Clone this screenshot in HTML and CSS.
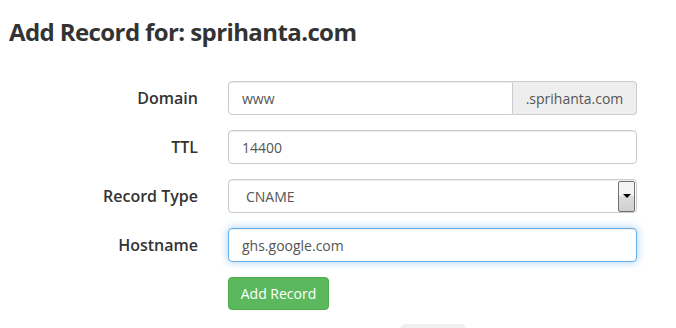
FILE: index.html
```html
<!DOCTYPE html>
<html>

<head>
  <link rel="stylesheet" href="styles.css">
</head>

<body>
  <div class="content">
    <h2 class="page-title">Add Record for: sprihanta.com</h2>

    <form class="record-form">
      <div class="form-row">
        <label class="form-label">Domain</label>
        <div class="input-group">
          <div class="form-control grouped">www</div>
          <span class="input-addon">.sprihanta.com</span>
        </div>
      </div>

      <div class="form-row">
        <label class="form-label">TTL</label>
        <div class="form-control">14400</div>
      </div>

      <div class="form-row">
        <label class="form-label">Record Type</label>
        <div class="form-control select">
          <span class="select-value">CNAME</span>
          <span class="select-arrow"><span class="caret"></span></span>
        </div>
      </div>

      <div class="form-row">
        <label class="form-label">Hostname</label>
        <div class="form-control focused">ghs.google.com</div>
      </div>

      <div class="form-row">
        <span class="form-label"></span>
        <button type="button" class="btn-success">Add Record</button>
      </div>
    </form>

    <div class="next-tab"></div>
  </div>
</body>

</html>
```

FILE: styles.css
```css
body {
  margin: 0;
  background: #fff;
  font-family: "Open Sans", "Liberation Sans", sans-serif;
  color: #333;
  overflow: hidden;
}

.content {
  display: flex;
  flex-direction: column;
}

.page-title {
  margin: 19px 0 0 9px;
  font-size: 24px;
  line-height: 26px;
  font-weight: 700;
  color: #333;
  letter-spacing: -0.6px;
}

.record-form {
  display: flex;
  flex-direction: column;
  gap: 15px;
  margin-top: 36px;
}

.form-row {
  display: flex;
  align-items: center;
  gap: 30px;
}

.form-label {
  width: 198px;
  flex: none;
  text-align: right;
  font-size: 16px;
  font-weight: 600;
  color: #333;
}

.form-control {
  box-sizing: border-box;
  width: 409px;
  height: 34px;
  padding: 0 13px;
  display: flex;
  align-items: center;
  font-size: 14px;
  color: #555;
  background: #fff;
  border: 1px solid #ccc;
  border-radius: 4px;
  box-shadow: inset 0 1px 1px rgba(0, 0, 0, 0.075);
}

.input-group {
  display: flex;
  width: 409px;
}

.form-control.grouped {
  width: 285px;
  border-radius: 4px 0 0 4px;
}

.input-addon {
  box-sizing: border-box;
  flex: 1;
  height: 34px;
  display: flex;
  align-items: center;
  justify-content: center;
  font-size: 14px;
  color: #555;
  background: #eee;
  border: 1px solid #ccc;
  border-left: 0;
  border-radius: 0 4px 4px 0;
}

.form-control.select {
  justify-content: space-between;
  padding: 0 1px 0 17px;
}

.select-arrow {
  box-sizing: border-box;
  width: 17px;
  height: 31px;
  display: flex;
  align-items: center;
  justify-content: center;
  border: 1px solid #707070;
  border-radius: 2px;
  background: linear-gradient(#f4f4f4, #f4f4f4 45%, #dcdcdc 50%, #d0d0d0);
}

.caret {
  width: 0;
  height: 0;
  border-left: 4px solid transparent;
  border-right: 4px solid transparent;
  border-top: 4px solid #000;
}

.form-control.focused {
  border-color: #66afe9;
  box-shadow: inset 0 1px 1px rgba(0, 0, 0, 0.075), 0 0 8px rgba(102, 175, 233, 0.6);
}

.btn-success {
  box-sizing: border-box;
  width: 101px;
  height: 33px;
  padding: 0;
  font-family: "Open Sans", "Liberation Sans", sans-serif;
  font-size: 14px;
  color: #fff;
  background: #5cb85c;
  border: 1px solid #4cae4c;
  border-radius: 4px;
}

.next-tab {
  margin: 14px 0 0 400px;
  width: 66px;
  height: 10px;
  background: #f0f0f0;
  border-radius: 5px 5px 0 0;
}
```
